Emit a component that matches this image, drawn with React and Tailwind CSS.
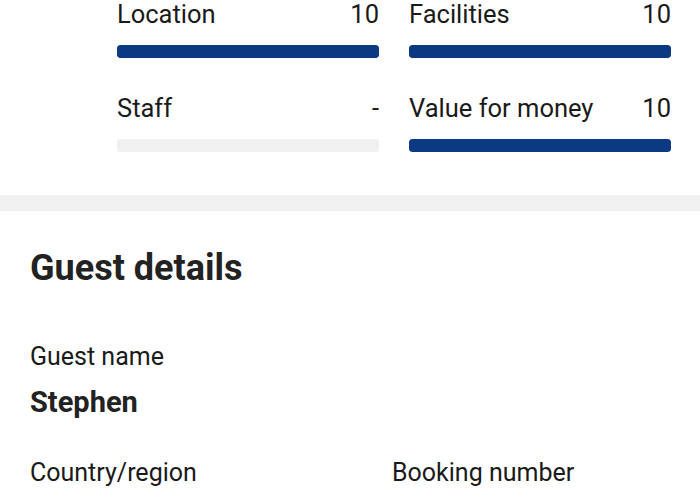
const scores = [
  { label: 'Location', value: '10', pct: 100 },
  { label: 'Facilities', value: '10', pct: 100 },
  { label: 'Staff', value: '-', pct: 0 },
  { label: 'Value for money', value: '10', pct: 100 },
];

function ScoreRow({ label, value, pct }) {
  return (
    <div>
      <div className="flex items-center justify-between text-[25.5px] leading-[28px]">
        <span>{label}</span>
        <span>{value}</span>
      </div>
      <div className="mt-[17px] h-[13px] w-full overflow-hidden rounded-[3px] bg-[#f0f0f0]">
        <div className="h-full rounded-[3px] bg-[#0b3a83]" style={{ width: `${pct}%` }} />
      </div>
    </div>
  );
}

export default function App() {
  return (
    <div className="h-[500px] w-[700px] overflow-hidden bg-white text-[#1a1a1a]" style={{ fontFamily: 'Roboto, "Noto Sans", sans-serif' }}>
      <div className="grid grid-cols-2 gap-x-[30px] gap-y-[36px] pl-[117px] pr-[29px]">
        {scores.map((s) => (
          <ScoreRow key={s.label} {...s} />
        ))}
      </div>

      <div className="mt-[43px] h-[16px] bg-[#f0f0f0]" />

      <div className="px-[30px] pt-[37px]">
        <h2 className="text-[36px] font-bold leading-[40px] text-[#222]">Guest details</h2>

        <div className="mt-[55px]">
          <p className="text-[25px] leading-[28px]">Guest name</p>
          <p className="mt-[15px] text-[29px] font-bold leading-[32px] text-[#222]">Stephen</p>
        </div>

        <div className="mt-[41px] grid grid-cols-[362px_1fr]">
          <p className="text-[25px] leading-[28px]">Country/region</p>
          <p className="text-[25px] leading-[28px]">Booking number</p>
        </div>
      </div>
    </div>
  );
}
